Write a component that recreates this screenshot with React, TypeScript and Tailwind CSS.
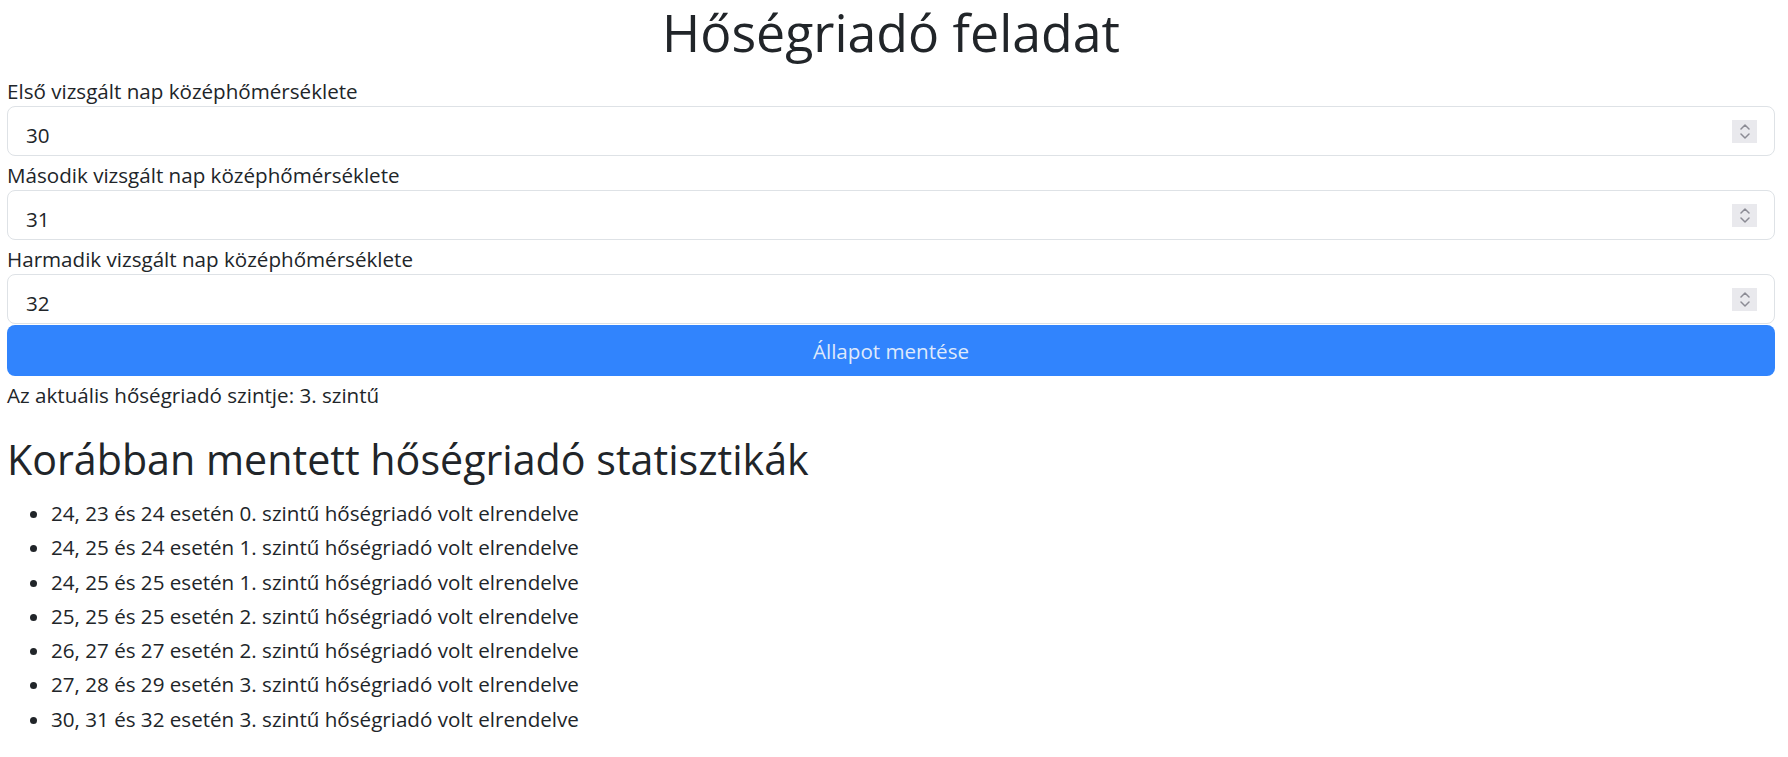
import React from "react";

const font = { fontFamily: '"Open Sans", "Noto Sans", sans-serif' };

function Spinner() {
  return (
    <div className="w-[25px] h-[23px] bg-[#e9e9ed] flex flex-col items-center justify-center gap-[3px]">
      <svg width="10" height="6" viewBox="0 0 10 6" fill="none">
        <path d="M1 5 L5 1 L9 5" stroke="#8b8b94" strokeWidth="1.5" strokeLinecap="round" strokeLinejoin="round" />
      </svg>
      <svg width="10" height="6" viewBox="0 0 10 6" fill="none">
        <path d="M1 1 L5 5 L9 1" stroke="#8b8b94" strokeWidth="1.5" strokeLinecap="round" strokeLinejoin="round" />
      </svg>
    </div>
  );
}

function Field({ label, value }: { label: string; value: string }) {
  return (
    <div className="flex flex-col">
      <label className="block h-[34px] text-[20.6px] leading-[38px] text-[#212529]">{label}</label>
      <div className="h-[50px] flex items-center justify-between border border-[#dee2e6] rounded-[8px] bg-white pl-[18px] pr-[17px]">
        <span className="pt-[7px] text-[20.6px] leading-[34px] text-[#212529]">{value}</span>
        <Spinner />
      </div>
    </div>
  );
}

const items = [
  "24, 23 és 24 esetén 0. szintű hőségriadó volt elrendelve",
  "24, 25 és 24 esetén 1. szintű hőségriadó volt elrendelve",
  "24, 25 és 25 esetén 1. szintű hőségriadó volt elrendelve",
  "25, 25 és 25 esetén 2. szintű hőségriadó volt elrendelve",
  "26, 27 és 27 esetén 2. szintű hőségriadó volt elrendelve",
  "27, 28 és 29 esetén 3. szintű hőségriadó volt elrendelve",
  "30, 31 és 32 esetén 3. szintű hőségriadó volt elrendelve",
];

export default function App() {
  return (
    <div className="w-full min-h-[757px] bg-white pl-[7px] pr-[13px] text-[#212529]" style={font}>
      <h1 className="text-center text-[51.8px] leading-[64px] font-normal mb-[8px]">Hőségriadó feladat</h1>
      <Field label="Első vizsgált nap középhőmérséklete" value="30" />
      <Field label="Második vizsgált nap középhőmérséklete" value="31" />
      <Field label="Harmadik vizsgált nap középhőmérséklete" value="32" />
      <button className="mt-px w-full h-[51px] rounded-[8px] bg-[#3184fd] text-[#dfe9fb] text-[20.6px] leading-[34px]">
        Állapot mentése
      </button>
      <p className="h-[34px] text-[20.6px] leading-[38px]">Az aktuális hőségriadó szintje: 3. szintű</p>
      <h2 className="mt-[24px] text-[41.2px] leading-[50px] font-normal mb-[11px]">Korábban mentett hőségriadó statisztikák</h2>
      <ul className="list-disc pl-[44px] text-[20.6px] leading-[34.3px]">
        {items.map((t) => (
          <li key={t} className="pt-[2px] leading-[32.3px]">{t}</li>
        ))}
      </ul>
    </div>
  );
}
